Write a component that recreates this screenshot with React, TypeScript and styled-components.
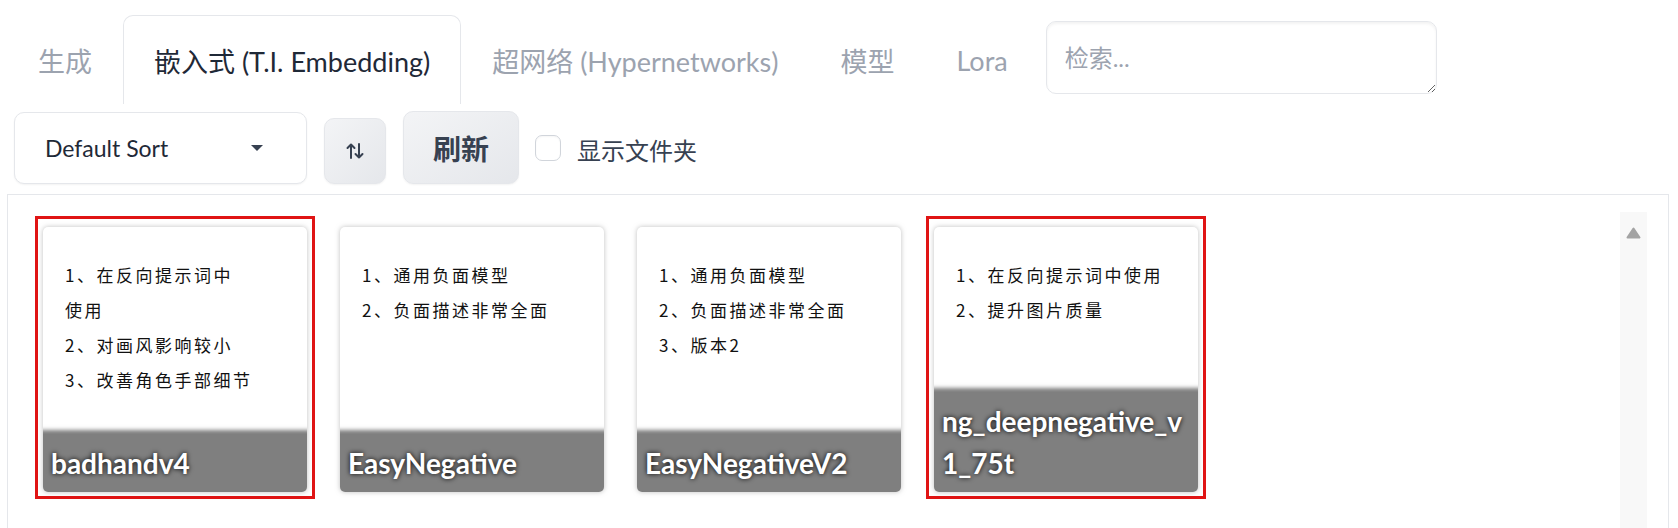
import React from 'react';
import styled, { createGlobalStyle } from 'styled-components';

const GlobalStyle = createGlobalStyle`
  html, body { margin: 0; padding: 0; background: #ffffff; overflow: hidden; }
  body { font-family: Lato, "Noto Sans CJK SC", sans-serif; }
  *, *::before, *::after { box-sizing: border-box; }
`;

const Page = styled.div`
  width: 1678px;
  height: 528px;
  overflow: hidden;
  padding: 0 9px 0 7px;
  display: flex;
  flex-direction: column;
`;

const TabBar = styled.div`
  display: flex;
  align-items: flex-start;
  padding-top: 15px;
  height: 104px;
`;

const Tab = styled.button<{ $active?: boolean }>`
  height: 89px;
  padding: 0 30px;
  display: flex;
  align-items: center;
  font-family: Lato, "Noto Sans CJK SC", sans-serif;
  font-size: 27px;
  font-weight: 400;
  color: ${(p) => (p.$active ? '#1f2937' : '#9ca3af')};
  background: #ffffff;
  border: 1px solid ${(p) => (p.$active ? '#e5e7eb' : 'transparent')};
  border-bottom: none;
  border-radius: 10px 10px 0 0;
  white-space: nowrap;
  cursor: pointer;
`;

const SearchBox = styled.textarea`
  margin: 6px 0 0 7px;
  width: 391px;
  height: 73px;
  padding: 18px 18px;
  font-family: Lato, "Noto Sans CJK SC", sans-serif;
  font-size: 24px;
  line-height: 36px;
  color: #1f2937;
  border: 1px solid #e5e7eb;
  border-radius: 10px;
  box-shadow: inset 0 2px 3px rgba(0, 0, 0, 0.05);
  resize: vertical;
  outline: none;
  &::placeholder { color: #9ca3af; }
`;

const ControlsRow = styled.div`
  display: flex;
  align-items: flex-end;
  gap: 17px;
  margin-top: 8px;
  padding-left: 7px;
  height: 72px;
`;

const Dropdown = styled.div`
  width: 293px;
  height: 72px;
  padding: 0 43px 0 30px;
  display: flex;
  align-items: center;
  justify-content: space-between;
  font-size: 23px;
  color: #1f2937;
  border: 1px solid #e5e7eb;
  border-radius: 10px;
  box-shadow: 0 1px 2px rgba(0, 0, 0, 0.05);
  background: #ffffff;
`;

const Caret = styled.span`
  width: 0;
  height: 0;
  border-left: 6px solid transparent;
  border-right: 6px solid transparent;
  border-top: 6px solid #374151;
`;

const GrayButton = styled.button<{ $w: number; $h: number }>`
  width: ${(p) => p.$w}px;
  height: ${(p) => p.$h}px;
  display: flex;
  align-items: center;
  justify-content: center;
  padding: 0;
  font-family: Lato, "Noto Sans CJK SC", sans-serif;
  font-size: 28px;
  font-weight: 700;
  color: #374151;
  border: 1px solid #e5e7eb;
  border-radius: 10px;
  background: linear-gradient(to bottom right, #f3f4f6, #e5e7eb);
  box-shadow: 0 1px 2px rgba(0, 0, 0, 0.05);
  cursor: pointer;
`;

const CheckWrap = styled.label`
  display: flex;
  align-items: center;
  gap: 16px;
  height: 72px;
  margin-left: -1px;
  font-size: 24px;
  color: #374151;
`;

const CheckBox = styled.span`
  width: 26px;
  height: 26px;
  border: 1px solid #d1d5db;
  border-radius: 7px;
  background: #ffffff;
  box-shadow: inset 0 1px 2px rgba(0, 0, 0, 0.04);
`;

const CheckText = styled.span`
  padding-top: 3px;
`;

const Panel = styled.div`
  margin-top: 10px;
  min-height: 380px;
  border: 1px solid #e5e7eb;
  display: flex;
`;

const CardsArea = styled.div`
  flex: 1;
  display: flex;
  align-items: flex-start;
  gap: 33px;
  padding: 32px 0 0 35px;
`;

const CardSlot = styled.div`
  position: relative;
  width: 264px;
  height: 265px;
`;

const Annotation = styled.div`
  position: absolute;
  top: -11px;
  left: -8px;
  right: -8px;
  bottom: -7px;
  border: 3px solid #e01414;
  pointer-events: none;
`;

const Card = styled.div`
  position: relative;
  width: 100%;
  height: 100%;
  border-radius: 5px;
  overflow: hidden;
  background: #ffffff;
  box-shadow: 0 0 5px rgba(128, 128, 128, 0.5);
`;

const Preview = styled.div`
  padding: 30px 0 0 22px;
  font-family: "Noto Sans CJK SC", sans-serif;
  font-size: 17px;
  letter-spacing: 2.5px;
  line-height: 35px;
  color: #111111;
`;

const PreviewLine = styled.div`
  white-space: nowrap;
`;

const Actions = styled.div`
  position: absolute;
  left: 0;
  right: 0;
  bottom: 0;
  padding: 8px;
  background: rgba(0, 0, 0, 0.5);
  box-shadow: 0 0 4px 4px rgba(0, 0, 0, 0.5);
`;

const Name = styled.div`
  font-family: Lato, sans-serif;
  font-size: 28px;
  font-weight: 700;
  line-height: 42px;
  color: #ffffff;
  text-shadow: 0 0 0.2em #000000;
  word-break: break-all;
  line-break: anywhere;
`;

const ScrollRail = styled.div`
  width: 27px;
  margin: 17px 21px 0 0;
  background: #f8f8f8;
  display: flex;
  justify-content: center;
  padding-top: 15px;
  align-self: stretch;
`;

const SortIcon = () => (
  <svg width="18" height="16" viewBox="0 0 18 16" fill="none" stroke="#374151" strokeWidth="2" strokeLinecap="round" strokeLinejoin="round">
    <path d="M5 15V1.5M1.5 5L5 1.5L8.5 5" />
    <path d="M13 1V14.5M9.5 11L13 14.5L16.5 11" />
  </svg>
);

const UpArrow = () => (
  <svg width="15" height="12" viewBox="0 0 15 12">
    <path d="M7.5 1.5L13.5 10.5H1.5Z" fill="#a3a3a3" stroke="#a3a3a3" strokeWidth="2" strokeLinejoin="round" />
  </svg>
);

type CardData = { name: string; lines: string[]; marked?: boolean };

const cards: CardData[] = [
  { name: 'badhandv4', lines: ['1、在反向提示词中', '使用', '2、对画风影响较小', '3、改善角色手部细节'], marked: true },
  { name: 'EasyNegative', lines: ['1、通用负面模型', '2、负面描述非常全面'] },
  { name: 'EasyNegativeV2', lines: ['1、通用负面模型', '2、负面描述非常全面', '3、版本2'] },
  { name: 'ng_deepnegative_v1_75t', lines: ['1、在反向提示词中使用', '2、提升图片质量'], marked: true },
];

const tabs = ['生成', '嵌入式 (T.I. Embedding)', '超网络 (Hypernetworks)', '模型', 'Lora'];

export default function App() {
  return (
    <>
      <GlobalStyle />
      <Page>
        <TabBar>
          {tabs.map((t, i) => (
            <Tab key={t} $active={i === 1}>{t}</Tab>
          ))}
          <SearchBox placeholder="检索..." />
        </TabBar>
        <ControlsRow>
          <Dropdown>
            <span>Default Sort</span>
            <Caret />
          </Dropdown>
          <GrayButton $w={62} $h={66}>
            <SortIcon />
          </GrayButton>
          <GrayButton $w={116} $h={73}>刷新</GrayButton>
          <CheckWrap>
            <CheckBox />
            <CheckText>显示文件夹</CheckText>
          </CheckWrap>
        </ControlsRow>
        <Panel>
          <CardsArea>
            {cards.map((c) => (
              <CardSlot key={c.name}>
                {c.marked && <Annotation />}
                <Card>
                  <Preview>
                    {c.lines.map((l, i) => (
                      <PreviewLine key={i}>{l}</PreviewLine>
                    ))}
                  </Preview>
                  <Actions>
                    <Name>{c.name}</Name>
                  </Actions>
                </Card>
              </CardSlot>
            ))}
          </CardsArea>
          <ScrollRail>
            <UpArrow />
          </ScrollRail>
        </Panel>
      </Page>
    </>
  );
}
